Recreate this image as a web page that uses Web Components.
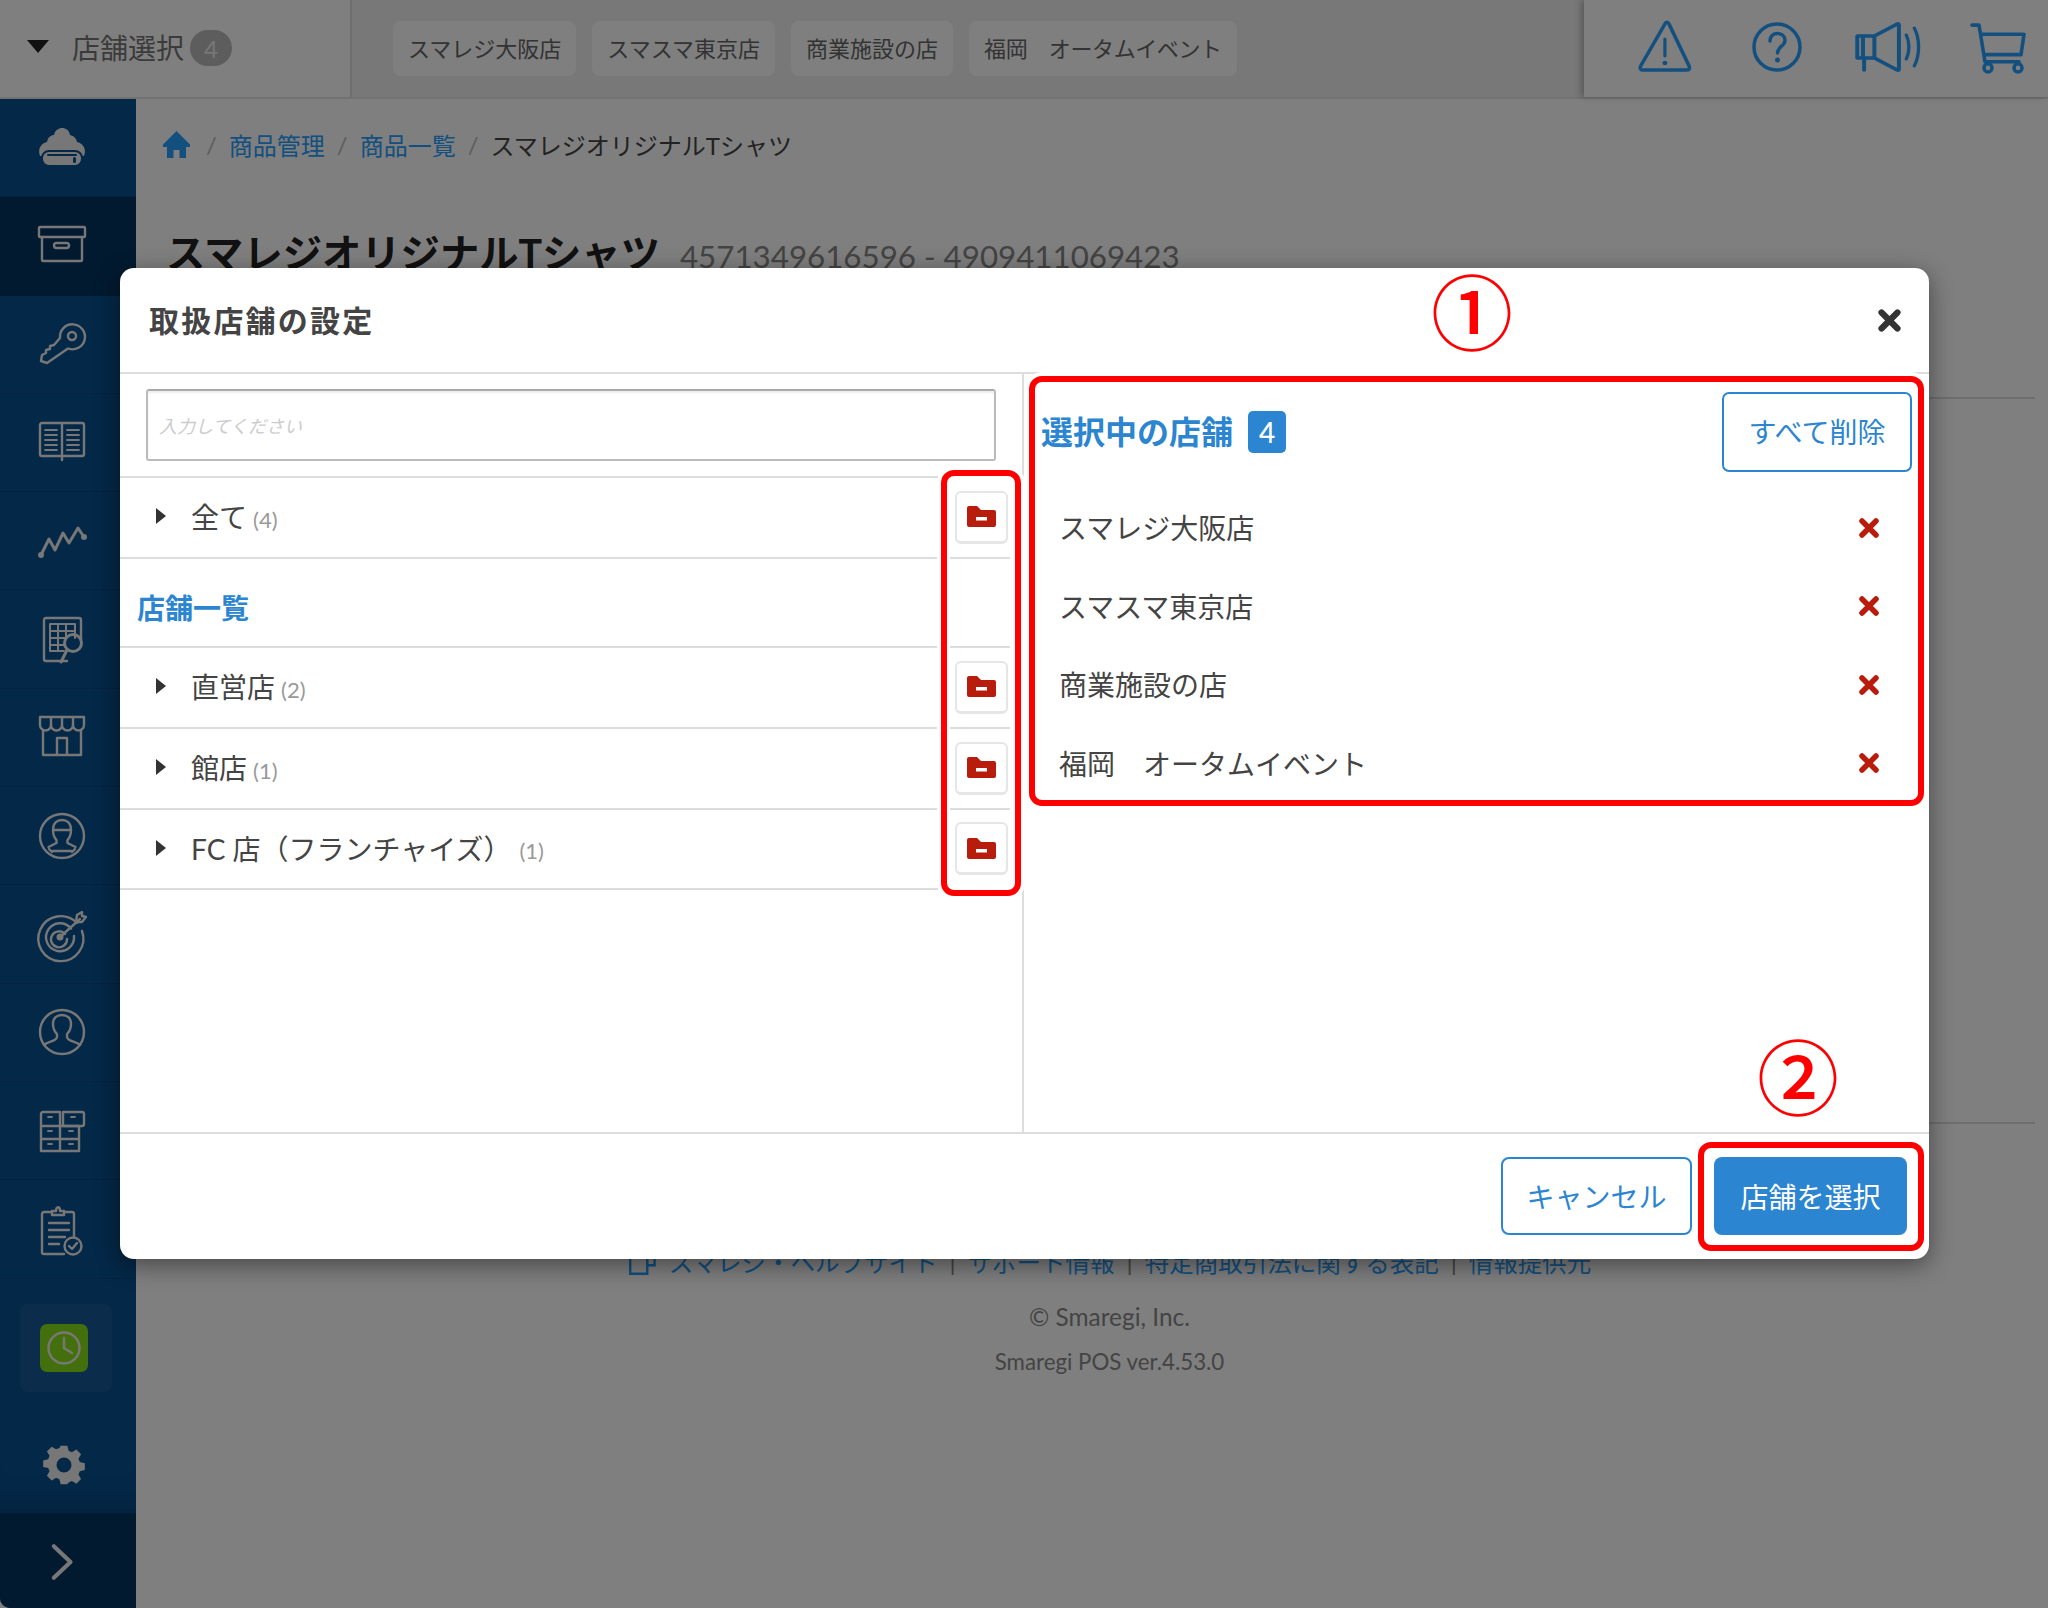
<!DOCTYPE html>
<html lang="ja"><head><meta charset="utf-8"><title>取扱店舗の設定</title>
<style>
html,body{margin:0;padding:0;background:#fff}
body{font-family:Lato,"Noto Sans CJK JP",sans-serif;color:#444}
</style></head>
<body>
<x-app>
  <x-topbar slot="top">
    <span slot="label">店舗選択</span><span slot="count">4</span>
    <x-chip slot="chips">スマレジ大阪店</x-chip><x-chip slot="chips">スマスマ東京店</x-chip><x-chip slot="chips">商業施設の店</x-chip><x-chip slot="chips" style="letter-spacing:-.4px">福岡　オータムイベント</x-chip>
  </x-topbar>
  <x-sidebar slot="side"></x-sidebar>
  <x-page slot="main"></x-page>
  <x-modal slot="modal">
    <span slot="title">取扱店舗の設定</span>
    <x-tree-row slot="all" count="(4)">全て</x-tree-row>
    <x-tree-row slot="groups" count="(2)">直営店</x-tree-row>
    <x-tree-row slot="groups" count="(1)" h="81">館店</x-tree-row>
    <x-tree-row slot="groups" count="(1)" h="80" gap="11">FC 店（フランチャイズ）</x-tree-row>
    <x-sel-row slot="sel">スマレジ大阪店</x-sel-row>
    <x-sel-row slot="sel">スマスマ東京店</x-sel-row>
    <x-sel-row slot="sel">商業施設の店</x-sel-row>
    <x-sel-row slot="sel">福岡　オータムイベント</x-sel-row>
    <x-btn slot="foot">キャンセル</x-btn>
    <x-btn slot="foot" primary>店舗を選択</x-btn>
  </x-modal>
</x-app>
<script>
const S='fill="none" stroke="currentColor" stroke-width="2.4" stroke-linecap="round" stroke-linejoin="round"';
const ICONS={
cloud:`<path fill="currentColor" d="M2 32C-1 24 4 19 9 18c1-5 4-7 7-7 1-5 5-7 8-7 4 0 7 2 8 7 4 1 6 3 7 7 5 1 10 6 7 14z"/><rect x="4" y="27" width="40" height="15" rx="7" fill="currentColor" stroke="#085090" stroke-width="2"/><rect x="9" y="30" width="30" height="2" rx="1" fill="#085090"/><rect x="35" y="33" width="3" height="6" rx="1.500" fill="#085090"/>`,
box:`<g ${S}><rect x="1" y="5" width="46" height="10" rx="1"/><path d="M4 15v23a1 1 0 0 0 1 1h38a1 1 0 0 0 1-1V15"/><rect x="16" y="21" width="15" height="5" rx="2.500"/></g>`,
key:`<g ${S}><path d="M22 18A12.500 12.500 0 1 1 30 28.500L9 43 3 41l1-6 4-2v-3l4-1v-3l4-1z"/><circle cx="34" cy="16" r="4"/></g>`,
book:`<g ${S} transform="translate(0 -2)"><path d="M24 6H4a2 2 0 0 0-2 2v29a2 2 0 0 0 2 2h40a2 2 0 0 0 2-2V8a2 2 0 0 0-2-2zv37"/><path stroke-width="1.800" d="M7 13h12M7 18h12M7 23h12M7 28h12M7 33h12M29 13h12M29 18h12M29 23h12M29 28h12M29 33h12"/></g>`,
chart:`<g ${S}><path stroke-width="3" d="M3 38 11 22l6 11 8-17 6 10 9-15 6 9"/></g><circle cx="3" cy="38" r="3" fill="currentColor"/><circle cx="46" cy="20" r="3" fill="currentColor"/>`,
report:`<g ${S}><path d="M29 46H8a2 2 0 0 1-2-2V5a2 2 0 0 1 2-2h33a2 2 0 0 1 2 2v20"/><path stroke-width="2" d="M12 9h25v14M12 9v27h14M12 16h25M12 23h16M12 30h14M20 9v27M28 9v14"/><circle cx="35" cy="28" r="8.500" stroke-width="3"/><path stroke-width="3" d="M29 35 23 47"/></g>`,
store:`<g ${S}><path d="M2 4h44v8a5.500 5.500 0 0 1-11 0 5.500 5.500 0 0 1-11 0 5.500 5.500 0 0 1-11 0 5.500 5.500 0 0 1-11 0z"/><path d="M13 4v8M24 4v8M35 4v8"/><path d="M5 17v25h38V17M19 42V25h10v17"/></g>`,
staff:`<g ${S}><circle cx="24" cy="24" r="22"/><path d="M15 18c0-7 4-10 9-10s9 3 9 10c0 4-1.500 8-3.500 10v3l8 4M15 18h18M15 18c0 4 1.500 8 3.500 10v3l-8 4M11 37l3 3M37 37l-3 3M15 39h18"/></g>`,
target:`<g ${S}><path d="M39 13A22.500 22.500 0 1 0 44 21"/><path d="M33 18.500A14 14 0 1 0 36 26"/><path d="M27 24a8 8 0 1 0 2 5"/><path d="M22 27 42 9"/><path d="M38 12l1-7 5-3 0 4 4 1-4 5z"/></g><circle cx="22" cy="27" r="3.500" fill="currentColor"/>`,
person:`<g ${S}><circle cx="24" cy="24" r="22"/><path d="M6 37c3-3 13-4 13-8v-3c-3-3-4-6-4-10 0-6 4-9 9-9s9 3 9 9c0 4-1 7-4 10v3c0 4 10 5 13 8"/></g>`,
shelf:`<g ${S} transform="translate(0 1)"><path d="M3 16V6a2 2 0 0 1 2-2h17v14H3zM3 18v13h19V18M3 31v12h19V31M22 31h19v12H22M22 18h19v13"/><path d="M25 4h19a2 2 0 0 1 2 2v10a2 2 0 0 1-2 2H25z"/><path stroke-width="1.800" d="M10 9h4M33 9h4M10 23h4M31 23h4M10 36h4M31 36h4"/></g>`,
clip:`<g ${S}><path d="M14 7H6a2 2 0 0 0-2 2v38a2 2 0 0 0 2 2h20M36 32V9a2 2 0 0 0-2-2h-8"/><path d="M14 10V6h4c0-5 4-5 4 0h4v4z"/><path d="M11 18h20M11 25h20M11 32h16M11 39h10"/><circle cx="35" cy="41" r="8.500"/><path d="M31 41l3 3 5-6"/></g>`,
clock:`<circle cx="24" cy="24" r="15.500" fill="none" stroke="currentColor" stroke-width="2.400"/><path d="M24 14v10l8 5" fill="none" stroke="currentColor" stroke-width="2.400" stroke-linecap="round"/>`,
gear:`<path fill="currentColor" fill-rule="evenodd" d="M20 1h8l1.500 6 4 1.700 5.300-3.200 5.700 5.700-3.200 5.300 1.700 4 6 1.500v8l-6 1.500-1.700 4 3.200 5.300-5.700 5.700-5.300-3.200-4 1.700L28 47h-8l-1.500-6-4-1.700-5.300 3.200-5.700-5.700 3.200-5.300-1.700-4L-1 26.500v-8l6-1.500 1.700-4-3.200-5.300 5.700-5.700 5.300 3.200 4-1.700zM24 15a9 9 0 1 0 0 18 9 9 0 0 0 0-18z"/>`,
chev:`<path d="M13 5l20 19-20 19" fill="none" stroke="currentColor" stroke-width="5" stroke-linecap="round" stroke-linejoin="round"/>`,
warn:`<path d="M26 3 2.500 45c-1 2.500 0 4 2.500 4h42c2.500 0 3.500-1.500 2.500-4L30 3c-1-2.500-3-2.500-4 0z" transform="translate(1 -1) scale(.96 1)" fill="none" stroke="currentColor" stroke-width="3.500" stroke-linejoin="round"/><path d="M26 17v17" stroke="currentColor" stroke-width="3" stroke-linecap="round"/><circle cx="26" cy="41" r="2.300" fill="currentColor"/>`,
help:`<circle cx="25" cy="25" r="23" fill="none" stroke="currentColor" stroke-width="3.500"/><path d="M18 19c0-5 3.500-7.500 7.500-7.500S33 14 33 18.500c0 5.500-7.500 6-7.500 12.500" fill="none" stroke="currentColor" stroke-width="3.500" stroke-linecap="round"/><circle cx="25.500" cy="38" r="2.500" fill="currentColor"/>`,
speak:`<path d="M2 14h15L37 2c1-.5 1.500 0 1.500 1v44c0 1-.5 1.500-1.500 1L17 36H2zM7 14v22M8 36v12M17 14v22" fill="none" stroke="currentColor" stroke-width="3.500" stroke-linejoin="round" stroke-linecap="round"/><path d="M46 13c3 7 3 17 0 24M53 6c5 11 5 27 0 38" fill="none" stroke="currentColor" stroke-width="3" stroke-linecap="round" transform="translate(-1 0)"/>`,
cart:`<path d="M1 3h7l6 36h34M10 12h43l-3 20H13" fill="none" stroke="currentColor" stroke-width="3.600" stroke-linejoin="round" stroke-linecap="round"/><circle cx="17" cy="45" r="4" fill="none" stroke="currentColor" stroke-width="3.500"/><circle cx="47" cy="45" r="4" fill="none" stroke="currentColor" stroke-width="3.500"/>`,
home:`<path fill="currentColor" d="M13.500 0 27 13.500V16h-4v11h-6.500v-8h-6v8H4V16H0v-2.500z"/>`,
folder:`<path fill="currentColor" d="M0 2a2 2 0 0 1 2-2h8l4 4h13a2 2 0 0 1 2 2v13a2 2 0 0 1-2 2H2a2 2 0 0 1-2-2z"/><rect x="9" y="11" width="11" height="3.500" fill="#fff"/>`,
x:`<path d="M4 4l14 14M18 4 4 18" fill="none" stroke="currentColor" stroke-width="5.500" stroke-linecap="round"/>`,
ext:`<path d="M7 1h14v14h-6M1 8h14v14H1z" fill="none" stroke="currentColor" stroke-width="2"/>`
};
const VB={warn:'0 0 54 50',help:'0 0 50 50',speak:'0 0 57 50',cart:'0 0 56 50',home:'0 0 27 27',folder:'0 0 29 21',x:'0 0 22 22',ext:'0 0 23 23'};
class Base extends HTMLElement{
  constructor(){super();this.attachShadow({mode:'open'})}
  connectedCallback(){this.shadowRoot.innerHTML=this.render()}
}
class XIcon extends Base{render(){const n=this.getAttribute('name'),w=this.getAttribute('w')||48,h=this.getAttribute('h')||w;
  return `<style>:host{display:inline-flex;flex:none;line-height:0}svg{display:block;overflow:visible}</style><svg width="${w}" height="${h}" viewBox="${VB[n]||'0 0 48 48'}" preserveAspectRatio="none">${ICONS[n]}</svg>`}}
customElements.define('x-icon',XIcon);
class XApp extends Base{render(){return `<style>
:host{display:grid;grid-template-columns:136px 1fr;grid-template-rows:99px 1509px;width:2048px;height:1608px;overflow:hidden;position:relative;background:#fff}
.t{grid-column:1/3}
.o{position:absolute;inset:0;background:rgba(0,0,0,.5);display:flex;padding:268px 119px 349px 120px;box-sizing:border-box}
</style><div class="t"><slot name="top"></slot></div><slot name="side"></slot><slot name="main"></slot><div class="o"><slot name="modal"></slot></div>`}}
customElements.define('x-app',XApp);
class XChip extends Base{render(){return `<style>:host{display:inline-flex;align-items:center;height:55px;box-sizing:border-box;padding:0 15px 4px;background:#fff;border-radius:8px;font-size:22px;color:#666;white-space:nowrap}</style><slot></slot>`}}
customElements.define('x-chip',XChip);
class XTopbar extends Base{render(){return `<style>
:host{display:flex;height:99px;box-sizing:border-box;border-bottom:2px solid #e4e4e4;background:#f0f0f0;position:relative}
.l{width:352px;box-sizing:border-box;display:flex;align-items:center;background:#fff;border-right:2px solid #ddd;padding:0 0 4px 27px}
.tri{width:0;height:0;border-left:11px solid transparent;border-right:11px solid transparent;border-top:13px solid #222;margin-right:23px}
.lab{font-size:28px;color:#777}
.n{width:42px;height:36px;border-radius:18px;background:#bbb;color:#eee;font-size:24px;display:flex;align-items:center;justify-content:center;margin:3px 0 0 6px}
.c{flex:1;display:flex;gap:16px;padding:21px 0 0 41px}
.r{width:464px;background:#fff;box-shadow:-3px 0 6px rgba(0,0,0,.25);color:#26a0fe;position:relative}
x-icon{position:absolute;top:22px}
</style><div class="l"><span class="tri"></span><span class="lab"><slot name="label"></slot></span><span class="n"><slot name="count"></slot></span></div>
<div class="c"><slot name="chips"></slot></div>
<div class="r"><x-icon name="warn" w="58" h="50" style="left:53px"></x-icon><x-icon name="help" w="50" h="50" style="left:168px"></x-icon><x-icon name="speak" w="65" h="50" style="left:271px"></x-icon><x-icon name="cart" w="56" h="51" style="left:387px"></x-icon></div>`}}
customElements.define('x-topbar',XTopbar);
class XSidebar extends Base{render(){
  const names=['cloud','box','key','book','chart','report','store','staff','target','person','shelf','clip'];
  return `<style>
:host{display:flex;flex-direction:column;background:#085090;color:#eee;border-bottom-left-radius:10px;overflow:hidden;height:1509px}
.i{height:98.300px;flex:none;display:flex;align-items:center;justify-content:center;box-sizing:border-box;border-bottom:1px solid #07477f;padding:0 13px 0 0}
.i.a{background:#043460;border-color:#043460}
.ck{flex:none;height:234px;display:flex;padding:25px 24px 0 20px;box-sizing:border-box;box-shadow:inset 0 -40px 40px -40px rgba(0,0,0,.2)}
.ci{width:92px;height:88px;background:rgba(255,255,255,.06);border-radius:8px;display:flex;align-items:center;padding-left:20px;box-sizing:border-box}
.g{width:48px;height:48px;background:#86e018;border-radius:7px;display:flex}
.gear{flex:none;height:0;position:relative}
.gear x-icon{position:absolute;left:44px;top:-68px}
.e{flex:1;background:#043460;display:flex;align-items:center;justify-content:center;padding:3px 10px 0 0}
</style>${names.map((n,i)=>`<div class="i${i==1?' a':''}"><x-icon name="${n}"></x-icon></div>`).join('')}
<div class="ck"><div class="ci"><div class="g"><x-icon name="clock"></x-icon></div></div></div>
<div class="gear"><x-icon name="gear" w="40"></x-icon></div>
<div class="e"><x-icon name="chev" w="40"></x-icon></div>`}}
customElements.define('x-sidebar',XSidebar);
class XPage extends Base{render(){return `<style>
:host{display:block;padding:0 13px 0 27px;font-size:24px;color:#444}
a{color:#26a0fe;text-decoration:none}
.b{display:flex;align-items:center;gap:12px;height:90px}
.b i{font-style:normal;color:#bbb}
.b x-icon{color:#26a0fe;margin-right:4px}
h1{margin:31px 0 0 3px;height:66px;display:flex;align-items:baseline;gap:20px;font-size:39.300px;font-weight:700;color:#222;line-height:66px;white-space:nowrap}
h1 small{font-size:31.300px;font-weight:400;color:#888}
hr{border:0;border-top:2px solid #ddd;margin:0}
.h1{margin-top:111px}.h2{margin-top:723px}
.f{display:flex;justify-content:center;align-items:center;gap:12px;margin:117px 0 0 22px;height:40px;font-size:24.500px;white-space:nowrap}
.f x-icon{color:#26a0fe}.f i{font-style:normal;color:#888}
.c{text-align:center;margin:20px 0 0 21px;color:#888;line-height:32px;font-size:24.400px}
.v{text-align:center;margin:14px 0 0 21px;color:#888;font-size:22.300px;line-height:30px}
</style><div class="b"><x-icon name="home" w="27"></x-icon><i>/</i><a>商品管理</a><i>/</i><a>商品一覧</a><i>/</i><span>スマレジオリジナルTシャツ</span></div>
<h1>スマレジオリジナルTシャツ<small>4571349616596 - 4909411069423</small></h1>
<hr class="h1"><hr class="h2">
<div class="f"><x-icon name="ext" w="28"></x-icon><a>スマレジ・ヘルプサイト</a><i>|</i><a>サポート情報</a><i>|</i><a>特定商取引法に関する表記</a><i>|</i><a>情報提供元</a></div>
<div class="c">© Smaregi, Inc.</div><div class="v">Smaregi POS ver.4.53.0</div>`}}
customElements.define('x-page',XPage);
class XMark extends Base{render(){return `<style>:host{display:block;position:absolute;box-sizing:border-box;border:6px solid #f00;border-radius:13px;box-shadow:0 0 0 4px #fff,inset 0 0 0 3px #fff;pointer-events:none}</style>`}}
customElements.define('x-mark',XMark);
class XNum extends Base{render(){return `<style>:host{display:block;position:absolute;color:#f00;font:500 82px/82px "Noto Sans CJK JP",sans-serif;width:82px;text-align:center;background:transparent}</style><slot></slot>`}}
customElements.define('x-num',XNum);
class XModal extends Base{render(){return `<style>
:host{display:flex;flex-direction:column;flex:1;background:#fff;border-radius:14px;box-shadow:0 6px 24px rgba(0,0,0,.45);position:relative;color:#444;font-size:28px}
header{height:104px;flex:none;display:flex;align-items:center;justify-content:space-between;padding:0 27px 0 29px;border-bottom:2px solid #ddd;box-sizing:content-box}
h2{margin:-3px 0 0;font-size:30px;letter-spacing:2.200px;font-weight:700;color:#444}
header x-icon{color:#333}
.m{flex:1;display:flex;min-height:0}
.L{width:904px;flex:none;box-sizing:border-box;border-right:2px solid #ddd}
.sr{height:104px;box-sizing:border-box;padding:15px 26px 0;border-bottom:2px solid #ddd;margin-right:12px;padding-right:14px}
.in{height:72px;box-sizing:border-box;border:2px solid #bbb;border-top-color:#aaa;border-radius:3px;padding-left:11px;display:flex;align-items:center;font-size:18px;color:#ccc;font-style:italic;box-shadow:inset 0 2px 2px #eee}
.sh{height:89px;box-sizing:border-box;border-bottom:2px solid #ddd;margin-right:12px;padding:21px 0 0 17px;color:#2b85d0;font-weight:700;font-size:28px;line-height:56px}
.R{flex:1;display:flex;flex-direction:column;padding:18px 17px 0}
.rh{display:flex;align-items:center;height:80px}
.rh h3{margin:0 0 4px;color:#2b85d0;font-size:32px;font-weight:700;white-space:nowrap}
.bd{margin-left:15px;width:38px;height:42px;background:#2b85d0;border-radius:5px;color:#fff;display:flex;align-items:center;justify-content:center;font-size:28px;font-weight:500}
.rm{margin-left:auto;width:190px;height:80px;box-sizing:border-box;border:2px solid #2b85d0;border-radius:7px;color:#2b85d0;display:flex;align-items:center;justify-content:center;font-size:28px;padding-bottom:2px}
.ls{margin:16px 0 0 18px;display:flex;flex-direction:column}
footer{height:127px;flex:none;box-sizing:border-box;border-top:2px solid #ddd;display:flex;justify-content:flex-end;align-items:flex-start;gap:22px;padding:23px 22px 0 0}
.m1{left:821px;top:202px;width:80px;height:426px}
.m2{left:909px;top:108px;width:895px;height:430px}
.m3{left:1578px;top:874px;width:226px;height:109px}
.n1{left:1311px;top:0}.n2{left:1637px;top:765px}
</style>
<header><h2><slot name="title"></slot></h2><x-icon name="x" w="25" h="25"></x-icon></header>
<div class="m"><div class="L"><div class="sr"><div class="in">入力してください</div></div><slot name="all"></slot><div class="sh">店舗一覧</div><slot name="groups"></slot></div>
<div class="R"><div class="rh"><h3>選択中の店舗</h3><span class="bd">4</span><span class="rm">すべて削除</span></div><div class="ls"><slot name="sel"></slot></div></div></div>
<footer><slot name="foot"></slot></footer>
<x-mark class="m1"></x-mark><x-mark class="m2"></x-mark><x-mark class="m3"></x-mark>
<x-num class="n1">①</x-num><x-num class="n2">②</x-num>`}}
customElements.define('x-modal',XModal);
class XTreeRow extends Base{render(){const c=this.getAttribute('count'),h=this.getAttribute('h')||81,g=this.getAttribute('gap')||9;
return `<style>
:host{display:flex;align-items:center;height:${h}px;box-sizing:border-box;border-bottom:2px solid #ddd;margin-right:12px;padding:0 2px 3px 36px;color:#444;font-size:28px;white-space:nowrap}
.t{width:0;height:0;border-left:10px solid #333;border-top:8px solid transparent;border-bottom:8px solid transparent;margin:0 25px 0 0}
.n{font-size:22px;color:#999;margin:6px 0 0 ${g-3}px}
button{margin:2px 0 0 auto;width:53px;height:53px;padding:0;background:#fff;border:2px solid #e6e6e6;border-bottom-width:3px;border-radius:6px;color:#b71c0c;display:flex;align-items:center;justify-content:center}
</style><span class="t"></span><slot></slot><span class="n">${c}</span><button><x-icon name="folder" w="29" h="21"></x-icon></button>`}}
customElements.define('x-tree-row',XTreeRow);
class XSelRow extends Base{render(){return `<style>
:host{display:flex;align-items:center;justify-content:space-between;height:78.500px;padding-right:32px;color:#444;font-size:28px;white-space:nowrap}
x-icon{color:#b71c0c;margin-top:1px}
</style><slot></slot><x-icon name="x" w="22" h="22"></x-icon>`}}
customElements.define('x-sel-row',XSelRow);
class XBtn extends Base{render(){const p=this.hasAttribute('primary');return `<style>
:host{display:flex;align-items:center;justify-content:center;width:${p?193:191}px;height:78px;box-sizing:border-box;border-radius:8px;font-size:28px;${p?'background:#2b85d0;color:#fff':'background:#fff;color:#2b85d0;border:2px solid #2b85d0'}}
</style><slot></slot>`}}
customElements.define('x-btn',XBtn);
</script>
</body></html>
